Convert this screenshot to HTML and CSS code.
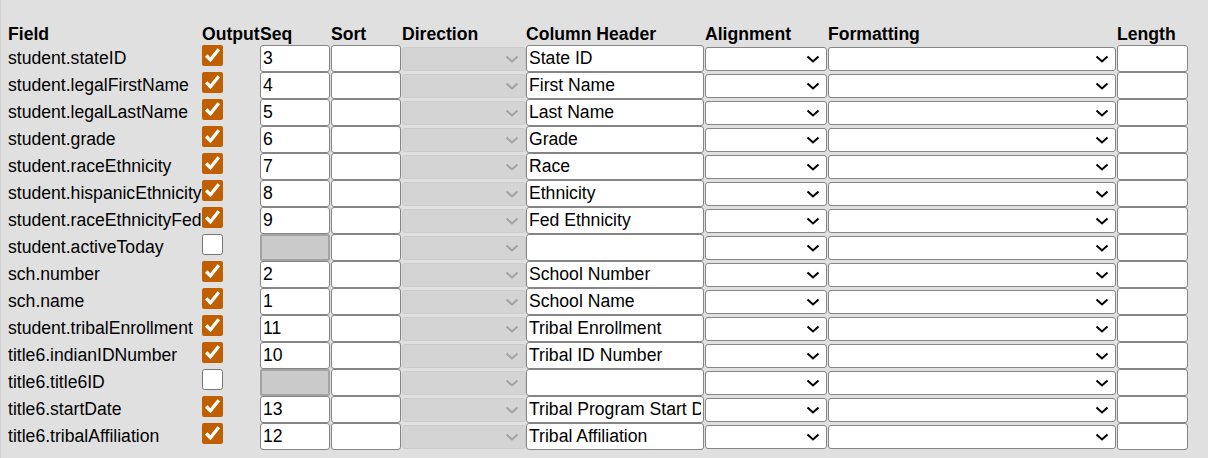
FILE: index.html
```html
<!DOCTYPE html>
<html>
<head>
<meta charset="utf-8">
<link rel="stylesheet" href="styles.css">
</head>
<body>
<div class="page">
  <div class="grid">
    <div class="row head">
      <div class="h">Field</div>
      <div class="h">Output</div>
      <div class="h">Seq</div>
      <div class="h">Sort</div>
      <div class="h">Direction</div>
      <div class="h">Column Header</div>
      <div class="h">Alignment</div>
      <div class="h">Formatting</div>
      <div class="h">Length</div>
    </div>
  </div>
  <div class="grid" id="rows"></div>
</div>
<script src="app.js"></script>
</body>
</html>
```
FILE: app.js
```js
var data = [
  ["student.stateID", true, "3", "State ID"],
  ["student.legalFirstName", true, "4", "First Name"],
  ["student.legalLastName", true, "5", "Last Name"],
  ["student.grade", true, "6", "Grade"],
  ["student.raceEthnicity", true, "7", "Race"],
  ["student.hispanicEthnicity", true, "8", "Ethnicity"],
  ["student.raceEthnicityFed", true, "9", "Fed Ethnicity"],
  ["student.activeToday", false, "", ""],
  ["sch.number", true, "2", "School Number"],
  ["sch.name", true, "1", "School Name"],
  ["student.tribalEnrollment", true, "11", "Tribal Enrollment"],
  ["title6.indianIDNumber", true, "10", "Tribal ID Number"],
  ["title6.title6ID", false, "", ""],
  ["title6.startDate", true, "13", "Tribal Program Start Date"],
  ["title6.tribalAffiliation", true, "12", "Tribal Affiliation"]
];
var chev = '<svg class="chev" width="14" height="8" viewBox="0 0 14 8"><path d="M1.5 1.5 L7 6.5 L12.5 1.5" fill="none" stroke="currentColor" stroke-width="2"/></svg>';
function sel(cls, disabled) {
  return '<div class="sel ' + cls + (disabled ? ' dis' : '') + '"><select' + (disabled ? ' disabled' : '') + '><option></option></select>' + chev + '</div>';
}
var html = "";
data.forEach(function (r) {
  html += '<div class="row">' +
    '<div class="field">' + r[0] + '</div>' +
    '<div class="out"><input type="checkbox"' + (r[1] ? ' checked' : '') + '></div>' +
    '<div><input class="txt num' + (r[1] ? '' : ' off') + '" value="' + r[2] + '"' + (r[1] ? '' : ' disabled') + '></div>' +
    '<div><input class="txt num" value=""></div>' +
    '<div class="c">' + sel('dir', true) + '</div>' +
    '<div><input class="txt hdr" value="' + r[3] + '"></div>' +
    '<div class="c">' + sel('align', false) + '</div>' +
    '<div class="c">' + sel('fmt', false) + '</div>' +
    '<div><input class="txt len" value=""></div>' +
    '</div>';
});
document.getElementById("rows").innerHTML = html;
```
FILE: styles.css
```css
html, body {
  margin: 0;
  padding: 0;
  background: #e0e0e0;
}
body {
  font-family: "Liberation Sans", Arial, sans-serif;
  font-size: 17.6px;
  color: #000;
}
.page {
  padding: 22px 0 0 7px;
  border-left: 1px solid #d2d2d2;
  min-height: 100vh;
  box-sizing: border-box;
}
.row {
  display: grid;
  grid-template-columns: 194px 58px 71px 71px 124px 179px 123px 289px 71px;
  height: 27px;
}
.row.head {
  height: 23px;
}
.h {
  font-weight: bold;
  line-height: 25px;
  height: 23px;
  white-space: nowrap;
}
.field {
  line-height: 26px;
  white-space: nowrap;
  overflow: hidden;
}
.out input {
  margin: 0;
  width: 21px;
  height: 21px;
  accent-color: #c05f00;
}
.c {
  display: flex;
  align-items: center;
}
.txt {
  box-sizing: border-box;
  height: 27px;
  margin: 0;
  border: 1px solid #858585;
  border-radius: 3px;
  padding: 0 2px;
  font-family: "Liberation Sans", Arial, sans-serif;
  font-size: 17.6px;
  color: #000;
  background: #fff;
  outline: none;
}
.num { width: 70px; }
.len { width: 71px; }
.hdr { width: 178px; }
.txt.off {
  background: #cacaca;
  border: 2px solid #a3a3a3;
  border-radius: 2px;
}
.sel {
  position: relative;
  height: 24px;
}
.sel select {
  -webkit-appearance: none;
  appearance: none;
  box-sizing: border-box;
  width: 100%;
  height: 24px;
  margin: 0;
  border: 1px solid #858585;
  border-radius: 3px;
  background: #fff;
  font-family: "Liberation Sans", Arial, sans-serif;
  font-size: 17.6px;
  outline: none;
}
.sel.dir { width: 124px; }
.sel.align { width: 122px; }
.sel.fmt { width: 288px; }
.sel.dis select {
  background: #d0d0d0;
  border-color: #c3c3c3;
}
.chev {
  position: absolute;
  right: 7px;
  top: 8px;
  color: #000;
  pointer-events: none;
}
.sel.dis .chev {
  color: #a2a2a2;
}
```
